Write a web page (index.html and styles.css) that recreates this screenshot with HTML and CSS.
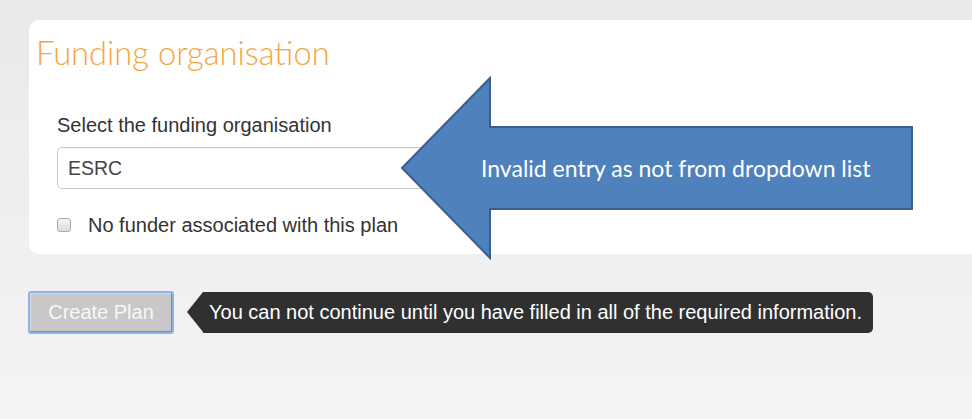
FILE: index.html
```html
<!DOCTYPE html>
<html lang="en">
<head>
<meta charset="utf-8">
<title>Funding organisation</title>
<link rel="stylesheet" href="styles.css">
</head>
<body>
<div class="page">
  <section class="card">
    <h2 class="title">Funding organisation</h2>
    <div class="field">
      <label class="label" for="funder">Select the funding organisation</label>
      <input class="text-input" id="funder" type="text" value="ESRC">
      <label class="check"><span class="box"></span>No funder associated with this plan</label>
    </div>
  </section>
  <div class="actions">
    <button class="btn" type="button">Create Plan</button>
    <div class="tooltip">You can not continue until you have filled in all of the required information.</div>
  </div>
  <div class="callout">
    <svg class="arrow" width="972" height="419" viewBox="0 0 972 419" xmlns="http://www.w3.org/2000/svg">
      <polygon points="402,168 490,78 490,127 912,127 912,209 490,209 490,258" fill="#4f81bd" stroke="#3a5f8b" stroke-width="2" stroke-linejoin="miter"/>
    </svg>
    <span class="callout-text">Invalid entry as not from dropdown list</span>
  </div>
</div>
</body>
</html>
```

FILE: styles.css
```css
* { box-sizing: border-box; }
html, body { margin: 0; padding: 0; }
body {
  width: 972px;
  height: 419px;
  overflow: hidden;
  background: linear-gradient(#e8e9e8 0px, #eceded 120px, #eff0ef 260px, #f3f4f3 419px);
  font-family: "Liberation Sans", Arial, sans-serif;
  color: #333;
}
.page {
  position: relative;
  width: 972px;
  height: 419px;
  padding: 20px 0 0 29px;
}
.card {
  background: #fff;
  border-radius: 10px 0 0 10px;
  height: 234px;
  padding: 13px 0 0 7px;
}
.title {
  margin: 0;
  font-family: Lato, "Open Sans", sans-serif;
  font-weight: 300;
  font-size: 32.7px;
  line-height: 40px;
  color: #f6a543;
  letter-spacing: 0;
}
.field {
  padding: 41px 0 0 21px;
  display: flex;
  flex-direction: column;
  align-items: flex-start;
}
.label {
  font-size: 20px;
  line-height: 22px;
  color: #333;
}
.text-input {
  margin-top: 11px;
  width: 420px;
  height: 42px;
  border: 1px solid #ccc;
  border-radius: 5px;
  padding: 0 10px;
  font-family: "Liberation Sans", Arial, sans-serif;
  font-size: 19.5px;
  color: #444;
  background: #fff;
  box-shadow: inset 0 1px 1px rgba(0,0,0,0.06);
}
.check {
  margin-top: 25px;
  display: flex;
  align-items: center;
  font-size: 20px;
  line-height: 22px;
  color: #333;
}
.box {
  width: 14px;
  height: 14px;
  border: 1px solid #a9a9a9;
  border-radius: 3px;
  background: linear-gradient(#f4f4f4, #dcdcdc);
  margin-right: 17px;
}
.actions {
  display: flex;
  align-items: center;
  margin-top: 37px;
  margin-left: -1px;
}
.btn {
  width: 146px;
  height: 43px;
  border: 2px solid #8cb3ef;
  border-radius: 3px;
  background: #c8c8c8;
  box-shadow: inset -1px -1px 0 #8a8a8a, inset 1px 1px 0 #d8d8d8;
  color: #f7f7f7;
  font-family: "Liberation Sans", Arial, sans-serif;
  font-size: 20px;
  padding: 0;
}
.tooltip {
  position: relative;
  margin-left: 29px;
  height: 41px;
  background: #303030;
  border-radius: 0 5px 5px 0;
  color: #fff;
  font-size: 20px;
  line-height: 41px;
  padding: 0 11px 0 6px;
  white-space: nowrap;
}
.tooltip::before {
  content: "";
  position: absolute;
  left: -16px;
  top: 0;
  border-style: solid;
  border-width: 20.5px 16px 20.5px 0;
  border-color: transparent #303030 transparent transparent;
}
.callout {
  position: absolute;
  left: 0;
  top: 0;
  width: 972px;
  height: 419px;
  pointer-events: none;
}
.arrow { position: absolute; left: 0; top: 0; }
.callout-text {
  position: absolute;
  left: 481px;
  top: 153px;
  font-family: Lato, "Open Sans", sans-serif;
  font-size: 23px;
  line-height: 30px;
  color: #fff;
  white-space: nowrap;
}
```
